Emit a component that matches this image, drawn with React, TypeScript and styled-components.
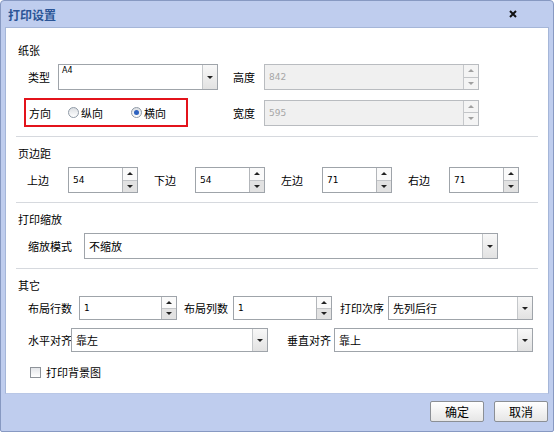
import styled, { createGlobalStyle } from "styled-components";

const GlobalStyle = createGlobalStyle`
  html, body {
    margin: 0;
    padding: 0;
    background: #ffffff;
  }
  body {
    font-family: "Noto Sans CJK SC", "Noto Sans", sans-serif;
    font-size: 11px;
    color: #000000;
  }
`;

export default function App() {
  return (
    <>
      <GlobalStyle />
      <Window>
        <TitleBar>
          <TitleText>打印设置</TitleText>
          <CloseButton>
            <svg width="8" height="8" viewBox="0 0 8 8">
              <path d="M1 1 L7 7 M7 1 L1 7" stroke="#111" strokeWidth="2" />
            </svg>
          </CloseButton>
        </TitleBar>

        <Body>
          <Section>
            <SectionTitle>纸张</SectionTitle>
            <PaperRow>
              <PaperLeft indent={12}>
                <Label width={30}>类型</Label>
                <Select width={160} h={26}>
                  <Value top>A4</Value>
                  <DropButton />
                </Select>
              </PaperLeft>
              <Label width={31} gap={15}>
                高度
              </Label>
              <NumberBox width={215} h={26} disabled value="842" />
            </PaperRow>
            <PaperRow>
              <PaperLeft indent={8}>
                <OrientationBox>
                  <Label width={39}>方向</Label>
                  <Radio />
                  <RadioText>纵向</RadioText>
                  <Radio checked />
                  <RadioText>横向</RadioText>
                </OrientationBox>
              </PaperLeft>
              <Label width={31} gap={15}>
                宽度
              </Label>
              <NumberBox width={215} h={26} disabled value="595" />
            </PaperRow>
          </Section>

          <Section>
            <SectionTitle>页边距</SectionTitle>
            <Row indent={11}>
              {[
                ["上边", "54"],
                ["下边", "54"],
                ["左边", "71"],
                ["右边", "71"],
              ].map(([label, value]) => (
                <MarginField key={label}>
                  <Label width={41}>{label}</Label>
                  <NumberBox width={70} h={26} value={value} />
                </MarginField>
              ))}
            </Row>
          </Section>

          <Section>
            <SectionTitle>打印缩放</SectionTitle>
            <Row indent={12}>
              <Label width={56}>缩放模式</Label>
              <Select width={414} h={26}>
                <Value cjk>不缩放</Value>
                <DropButton />
              </Select>
            </Row>
          </Section>

          <Section last>
            <SectionTitle tight>其它</SectionTitle>
            <Row indent={12}>
              <Label width={51}>布局行数</Label>
              <NumberBox width={98} h={24} value="1" />
              <Label width={49} gap={7}>
                布局列数
              </Label>
              <NumberBox width={99} h={24} value="1" />
              <Label width={48} gap={8}>
                打印次序
              </Label>
              <Select width={145} h={24}>
                <Value cjk>先列后行</Value>
                <DropButton />
              </Select>
            </Row>
            <Row indent={12}>
              <Label width={43}>水平对齐</Label>
              <Select width={197} h={24}>
                <Value cjk>靠左</Value>
                <DropButton />
              </Select>
              <Label width={47} gap={19}>
                垂直对齐
              </Label>
              <Select width={199} h={24}>
                <Value cjk>靠上</Value>
                <DropButton />
              </Select>
            </Row>
            <CheckRow>
              <CheckBox />
              <span>打印背景图</span>
            </CheckRow>
          </Section>
        </Body>

        <Footer>
          <Button>确定</Button>
          <Button>取消</Button>
        </Footer>
      </Window>
    </>
  );
}

function NumberBox({
  width,
  h,
  value,
  disabled = false,
}: {
  width: number;
  h: number;
  value: string;
  disabled?: boolean;
}) {
  return (
    <Field width={width} h={h} disabled={disabled}>
      <Value disabled={disabled}>{value}</Value>
      <Spinner disabled={disabled}>
        <SpinHalf disabled={disabled}>
          <Arrow up disabled={disabled} />
        </SpinHalf>
        <SpinHalf lower disabled={disabled}>
          <Arrow disabled={disabled} />
        </SpinHalf>
      </Spinner>
    </Field>
  );
}

function Select({
  width,
  h,
  children,
}: {
  width: number;
  h: number;
  children: React.ReactNode;
}) {
  return (
    <Field width={width} h={h}>
      {children}
    </Field>
  );
}

function DropButton() {
  return (
    <DropBtn>
      <Arrow />
    </DropBtn>
  );
}

const Window = styled.div`
  width: 554px;
  height: 432px;
  box-sizing: border-box;
  display: flex;
  flex-direction: column;
  background: #bfcdee;
  border: 1px solid #8799c2;
  border-radius: 4px 4px 2px 2px;
`;

const TitleBar = styled.div`
  height: 26px;
  display: flex;
  align-items: center;
  justify-content: space-between;
  padding: 0 36px 0 7px;
`;

const TitleText = styled.span`
  font-size: 12px;
  font-weight: bold;
  color: #2b5597;
`;

const CloseButton = styled.span`
  display: flex;
  width: 8px;
  height: 8px;
`;

const Body = styled.div`
  flex: 1;
  margin: 0 4px;
  padding: 6px 10px 0;
  background: #ffffff;
  border: 1px solid #a5b6d8;
  border-bottom-color: #b9c7e6;
`;

const Section = styled.div<{ last?: boolean }>`
  display: flex;
  flex-direction: column;
  gap: 8px;
  padding: 8px 0 9px;
  border-bottom: ${(p) => (p.last ? "none" : "1px solid #d6d9de")};
`;

const SectionTitle = styled.div<{ tight?: boolean }>`
  line-height: 16px;
  padding-left: 2px;
  margin-bottom: ${(p) => (p.tight ? "-5px" : "-2px")};
`;

const PaperRow = styled.div`
  display: flex;
  align-items: center;
`;

const PaperLeft = styled.div<{ indent: number }>`
  flex: none;
  width: 202px;
  box-sizing: border-box;
  display: flex;
  align-items: center;
  padding-left: ${(p) => p.indent}px;
`;

const OrientationBox = styled.div`
  flex: none;
  display: flex;
  align-items: center;
  width: 164px;
  height: 29px;
  box-sizing: border-box;
  border: 2px solid #e3131b;
  padding-left: 3px;
`;

const RadioText = styled.span`
  flex: none;
  white-space: nowrap;
  margin: 0 28px 0 2px;
`;

const Radio = styled.span<{ checked?: boolean }>`
  flex: none;
  position: relative;
  width: 11px;
  height: 11px;
  box-sizing: border-box;
  border-radius: 50%;
  border: 1px solid #8f9aa6;
  background: linear-gradient(#dcdfe3, #ffffff);
  &::after {
    content: "";
    display: ${(p) => (p.checked ? "block" : "none")};
    position: absolute;
    left: 2px;
    top: 2px;
    width: 5px;
    height: 5px;
    border-radius: 50%;
    background: #2d62c0;
  }
`;

const Row = styled.div<{ indent: number }>`
  display: flex;
  align-items: center;
  padding-left: ${(p) => p.indent}px;
`;

const MarginField = styled.div`
  display: flex;
  align-items: center;
  margin-right: 16px;
`;

const Label = styled.span<{ width: number; gap?: number }>`
  flex: none;
  width: ${(p) => p.width}px;
  margin-left: ${(p) => p.gap ?? 0}px;
  white-space: nowrap;
`;

const Field = styled.div<{
  width: number;
  h: number;
  disabled?: boolean;
}>`
  flex: none;
  display: flex;
  width: ${(p) => p.width}px;
  height: ${(p) => p.h}px;
  box-sizing: border-box;
  border: 1px solid ${(p) => (p.disabled ? "#b9bcc0" : "#9fa4aa")};
  background: ${(p) => (p.disabled ? "#f0f0f0" : "#ffffff")};
`;

const Value = styled.div<{ top?: boolean; disabled?: boolean; cjk?: boolean }>`
  flex: 1;
  display: flex;
  align-items: ${(p) => (p.top ? "flex-start" : "center")};
  padding: ${(p) => (p.top ? "1px 0 0 3px" : "0 0 0 4px")};
  font-family: ${(p) =>
    p.cjk
      ? `"Noto Sans CJK SC", sans-serif`
      : `"DejaVu Sans", "Liberation Sans", sans-serif`};
  font-size: ${(p) => (p.cjk ? "11px" : p.top ? "8px" : "9px")};
  color: ${(p) => (p.disabled ? "#a6a6a6" : "#000000")};
`;

const Spinner = styled.div<{ disabled?: boolean }>`
  width: 14px;
  display: flex;
  flex-direction: column;
  border-left: 1px solid ${(p) => (p.disabled ? "#c6c8cb" : "#b3b6ba")};
`;

const SpinHalf = styled.div<{ lower?: boolean; disabled?: boolean }>`
  flex: 1;
  display: flex;
  align-items: center;
  justify-content: center;
  background: ${(p) =>
    p.lower && !p.disabled ? "#e2e2e2" : p.disabled ? "#f4f4f4" : "#fafafa"};
  border-top: ${(p) => (p.lower ? "1px solid #c3c5c8" : "none")};
`;

const Arrow = styled.span<{ up?: boolean; disabled?: boolean }>`
  width: 0;
  height: 0;
  border-left: 3px solid transparent;
  border-right: 3px solid transparent;
  ${(p) =>
    p.up
      ? `border-bottom: 3px solid ${p.disabled ? "#a0a0a0" : "#222"};`
      : `border-top: 3px solid ${p.disabled ? "#a0a0a0" : "#222"};`}
`;

const DropBtn = styled.div`
  width: 14px;
  display: flex;
  align-items: center;
  justify-content: center;
  border-left: 1px solid #c4c7ca;
  background: linear-gradient(#f8f8f8, #e2e2e2);
`;

const CheckRow = styled.div`
  display: flex;
  align-items: center;
  gap: 5px;
  padding-left: 14px;
  margin-top: 4px;
  line-height: 16px;
`;

const CheckBox = styled.span`
  width: 11px;
  height: 11px;
  box-sizing: border-box;
  border: 1px solid #8e9399;
  background: linear-gradient(#e4e6e9, #ffffff);
`;

const Footer = styled.div`
  height: 35px;
  display: flex;
  align-items: center;
  justify-content: flex-end;
  gap: 10px;
  padding: 0 5px 2px 0;
`;

const Button = styled.div`
  width: 54px;
  height: 21px;
  box-sizing: border-box;
  display: flex;
  align-items: center;
  justify-content: center;
  font-size: 12px;
  border: 1px solid #8b8f95;
  border-radius: 2px;
  background: linear-gradient(#ffffff, #e6e6e6);
`;
